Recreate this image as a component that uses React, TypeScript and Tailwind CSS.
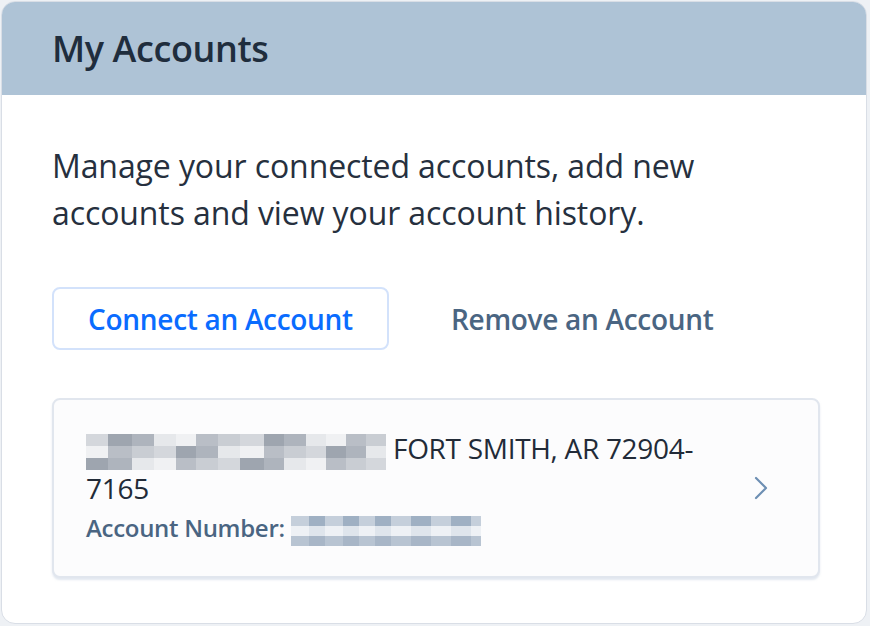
import React from "react";

function Blur({ widths, tone, rowH }: { widths: number[]; tone: string[]; rowH: string }) {
  return (
    <span className="inline-flex flex-col align-middle">
      {[0, 1, 2].map((row) => (
        <span key={row} className="flex">
          {widths.map((w, i) => (
            <span
              key={i}
              className={rowH}
              style={{ width: w, background: tone[(i * 3 + row * 5) % tone.length] }}
            />
          ))}
        </span>
      ))}
    </span>
  );
}

export default function App() {
  return (
    <div
      className="min-h-screen w-full bg-[#eef1f5] p-[1px] pr-[3px] pb-[2px]"
      style={{ fontFamily: '"Open Sans", "Noto Sans", sans-serif' }}
    >
      <div className="h-[623px] rounded-[14px] border border-[#d9dee6] bg-white overflow-hidden flex flex-col">
        <div className="h-[93px] shrink-0 bg-[#aec3d6] flex items-center px-[50px]">
          <h1 className="text-[36px] font-semibold text-[#1f2d3d] tracking-[-0.4px]">My Accounts</h1>
        </div>
        <div className="px-[50px] pt-[47px]">
          <p className="text-[32px] leading-[47px] text-[#26303e] max-w-[720px] tracking-[-0.1px]">
            Manage your connected accounts, add new accounts and view your account history.
          </p>
          <div className="mt-[51px] flex items-center gap-[62px]">
            <button className="h-[63px] w-[337px] rounded-[8px] border-2 border-[#d3e2fb] text-[28px] font-semibold text-[#0a6cff] tracking-[-0.3px]">
              Connect an Account
            </button>
            <button className="text-[28px] font-semibold text-[#4a6582] tracking-[-0.3px]">Remove an Account</button>
          </div>
          <div className="mt-[48px] w-[768px] h-[180px] rounded-[8px] border-2 border-[#e1e6ee] bg-[#fcfcfd] shadow-[0_2px_2px_rgba(200,210,225,0.5)] flex items-center pl-[32px] pr-[50px]">
            <div className="flex-1">
              <div className="text-[28px] leading-[36px] text-[#222b38] tracking-[-0.3px]">
                <Blur
                  rowH="h-[12px]"
                  widths={[22, 24, 22, 22, 20, 22, 22, 24, 20, 22, 20, 20, 20, 20]}
                  tone={["#d4d7dc", "#b9bec6", "#e6e8eb", "#9ea5af", "#c9cdd3", "#f0f1f3", "#aeb4bd"]}
                />{" "}
                FORT SMITH, AR 72904-
                <br />
                7165
              </div>
              <div className="mt-[6px] text-[24px] leading-[32px] font-semibold text-[#4a6582] tracking-[-0.3px]">
                Account Number:{" "}
                <Blur
                  rowH="h-[10px]"
                  widths={[18, 16, 18, 16, 16, 16, 20, 20, 20, 20, 10]}
                  tone={["#c5cfdb", "#a8b6c7", "#dfe5ec", "#9fb0c3", "#b8c4d2", "#eef1f5"]}
                />
              </div>
            </div>
            <svg width="14" height="24" viewBox="0 0 14 24" fill="none" className="shrink-0">
              <path d="M2 2 L12 12 L2 22" stroke="#6d8fb3" strokeWidth="2.2" strokeLinecap="round" strokeLinejoin="round" />
            </svg>
          </div>
        </div>
      </div>
    </div>
  );
}
